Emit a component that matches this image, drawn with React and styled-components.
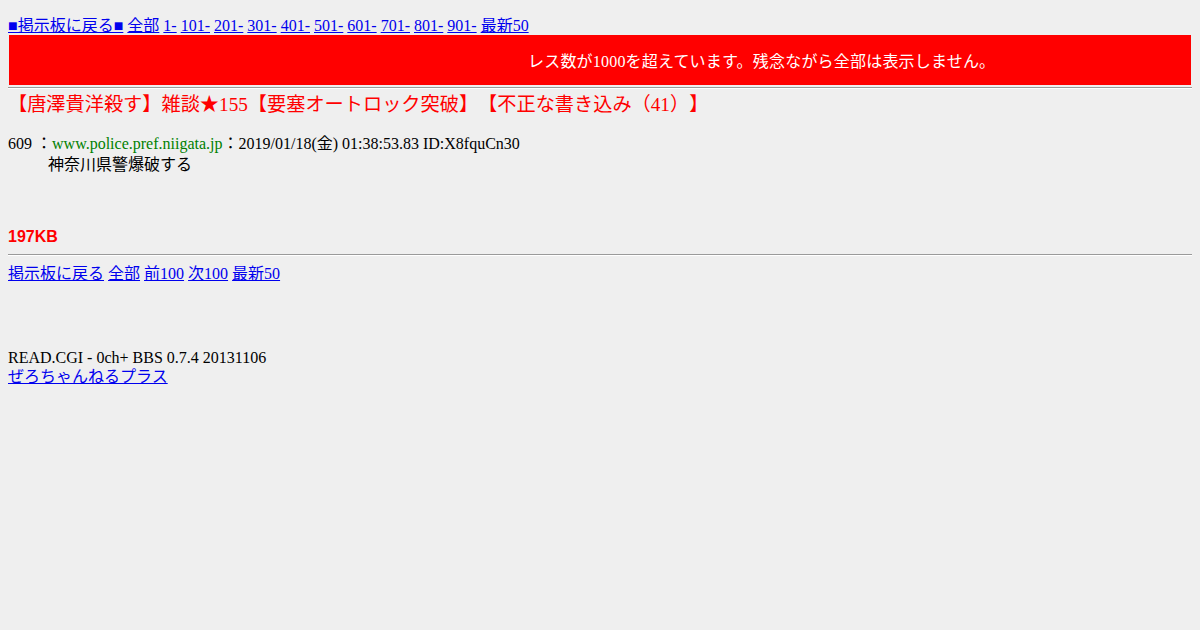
import React from 'react';
import styled, { createGlobalStyle } from 'styled-components';

const GlobalStyle = createGlobalStyle`
  body {
    margin: 8px;
    background: #efefef;
    color: #000;
    font-family: "Liberation Serif", "Noto Sans CJK JP", serif;
    font-size: 16px;
    text-spacing-trim: space-all;
  }
  a {
    color: #0000ee;
  }
`;

const Nav = styled.div`
  padding-top: 9px;
  line-height: 18px;

  a + a {
    margin-left: 4px;
  }
`;

const Banner = styled.div`
  margin: 0 1px;
  height: 50px;
  background: #ff0000;
  color: #fff;
  display: flex;
  align-items: center;
  padding-left: 519px;
  font-size: 16px;
  letter-spacing: 0.2px;
`;

const Rule = styled.hr`
  margin: ${p => p.$top || 2}px 0 0;
  border: 0;
  border-top: 1px solid #9a9a9a;
  border-bottom: 1px solid #fff;
  height: 0;
`;

const Title = styled.h1`
  margin: 4px 0 0;
  font-size: 19.2px;
  font-weight: normal;
  line-height: 24px;
  color: #ff0000;
`;

const Thread = styled.dl`
  margin: 18px 0 0;
  line-height: 18px;
`;

const PostHead = styled.dt`
  margin: 0;

  span {
    color: #008000;
  }
`;

const PostBody = styled.dd`
  margin: 3px 0 0 40px;
`;

const Size = styled.div`
  margin-top: 54px;
  font-family: "Liberation Sans", Arial, sans-serif;
  font-weight: bold;
  color: #ff0000;
  line-height: 18px;
`;

const Links = styled.div`
  margin-top: 9px;
  line-height: 18px;

  a + a {
    margin-left: 4px;
  }
`;

const Footer = styled.div`
  margin-top: 65px;
  line-height: 19px;
`;

const topLinks = ['全部', '1-', '101-', '201-', '301-', '401-', '501-', '601-', '701-', '801-', '901-', '最新50'];

export default function App() {
  return (
    <>
      <GlobalStyle />
      <Nav>
        <a href="#">■掲示板に戻る■</a>
        {topLinks.map(l => (
          <a key={l} href="#">{l}</a>
        ))}
      </Nav>
      <Banner>レス数が1000を超えています。残念ながら全部は表示しません。</Banner>
      <Rule />
      <Title>【唐澤貴洋殺す】雑談★155【要塞オートロック突破】【不正な書き込み（41）】</Title>
      <Thread>
        <PostHead>
          609 ：<span>www.police.pref.niigata.jp</span>：2019/01/18(金) 01:38:53.83 ID:X8fquCn30
        </PostHead>
        <PostBody>神奈川県警爆破する</PostBody>
      </Thread>
      <Size>197KB</Size>
      <Rule $top={8} />
      <Links>
        <a href="#">掲示板に戻る</a>
        <a href="#">全部</a>
        <a href="#">前100</a>
        <a href="#">次100</a>
        <a href="#">最新50</a>
      </Links>
      <Footer>
        READ.CGI - 0ch+ BBS 0.7.4 20131106
        <br />
        <a href="#">ぜろちゃんねるプラス</a>
      </Footer>
    </>
  );
}
